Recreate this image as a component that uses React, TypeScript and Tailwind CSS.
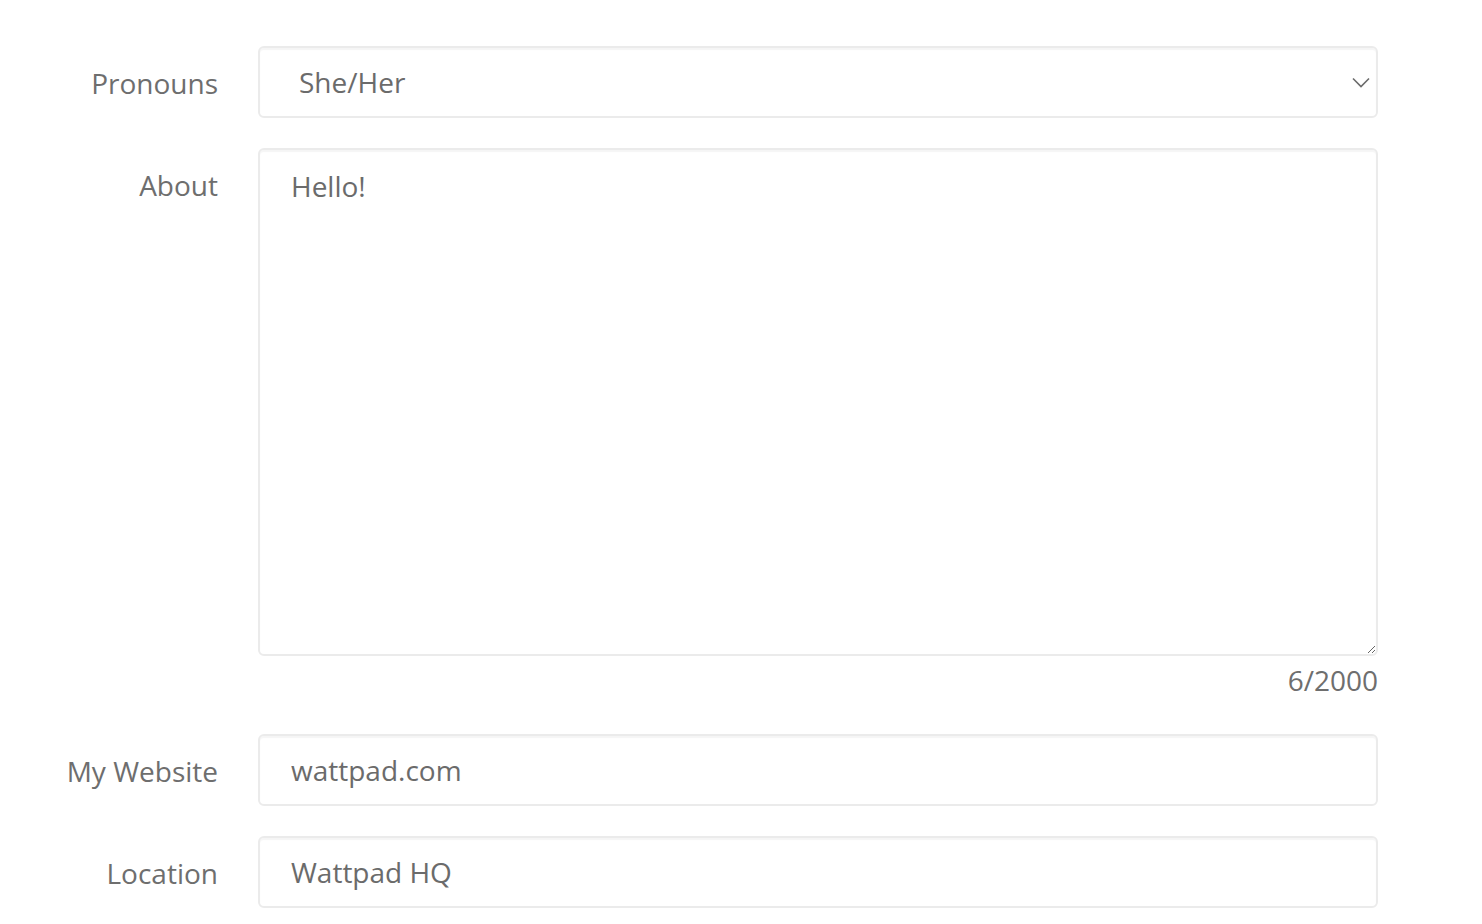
import React from "react";

const font = { fontFamily: '"Open Sans", "Noto Sans", sans-serif' };

export default function App() {
  const box =
    "w-[1120px] shrink-0 rounded-[6px] border-2 border-[#ebebeb] bg-white shadow-[inset_0_2px_1px_rgba(0,0,0,0.04)] text-[28px] leading-[40px] text-[#6b6b6b] outline-none";
  return (
    <div className="min-h-screen w-full bg-white text-[#6e6e6e]" style={font}>
      <div className="pt-[46px] flex flex-col">
        {/* Pronouns */}
        <div className="flex gap-[40px] items-center h-[72px]">
          <label className="w-[218px] shrink-0 text-right text-[28px] leading-[40px] pt-[1px]">Pronouns</label>
          <div className="relative">
            <select
              className={`${box} h-[72px] appearance-none pl-[39px] pr-[40px] pb-[1px]`}
              defaultValue="she"
              style={font}
            >
              <option value="she">She/Her</option>
              <option value="he">He/Him</option>
              <option value="they">They/Them</option>
            </select>
            <svg
              className="pointer-events-none absolute right-[8px] top-[31px]"
              width="18"
              height="11"
              viewBox="0 0 18 11"
              fill="none"
            >
              <path d="M1 1.5 L9 9.5 L17 1.5" stroke="#6b6b6b" strokeWidth="1.6" />
            </svg>
          </div>
        </div>

        {/* About */}
        <div className="flex gap-[40px] mt-[30px]">
          <label className="w-[218px] shrink-0 text-right text-[28px] leading-[40px] pt-[17px]">About</label>
          <div className="flex flex-col">
            <textarea
              className={`${box} h-[508px] px-[31px] pt-[16px] resize-y`}
              defaultValue="Hello!"
              style={font}
            />
            <div className="mt-[4px] text-right text-[28px] leading-[40px]">6/2000</div>
          </div>
        </div>

        {/* My Website */}
        <div className="flex gap-[40px] items-center h-[72px] mt-[34px]">
          <label className="w-[218px] shrink-0 text-right text-[28px] leading-[40px] pt-[2px]">My Website</label>
          <input
            className={`${box} h-[72px] px-[31px] pb-[1px]`}
            defaultValue="wattpad.com"
            style={font}
          />
        </div>

        {/* Location */}
        <div className="flex gap-[40px] items-center h-[72px] mt-[30px]">
          <label className="w-[218px] shrink-0 text-right text-[28px] leading-[40px] pt-[2px]">Location</label>
          <input
            className={`${box} h-[72px] px-[31px]`}
            defaultValue="Wattpad HQ"
            style={font}
          />
        </div>
      </div>
    </div>
  );
}
